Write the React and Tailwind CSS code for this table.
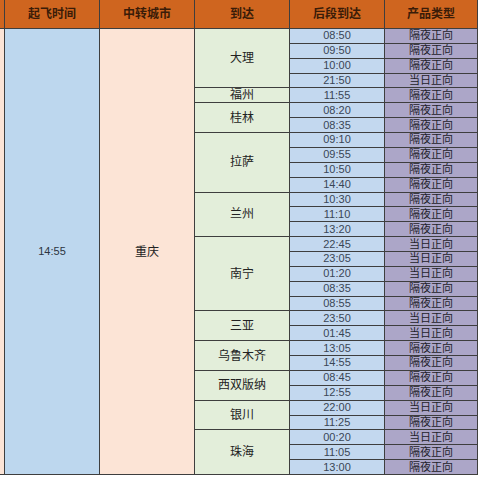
const GROUPS = [
  { city: "大理", rows: [["08:50", "隔夜正向"], ["09:50", "隔夜正向"], ["10:00", "隔夜正向"], ["21:50", "当日正向"]] },
  { city: "福州", rows: [["11:55", "隔夜正向"]] },
  { city: "桂林", rows: [["08:20", "隔夜正向"], ["08:35", "隔夜正向"]] },
  { city: "拉萨", rows: [["09:10", "隔夜正向"], ["09:55", "隔夜正向"], ["10:50", "隔夜正向"], ["14:40", "隔夜正向"]] },
  { city: "兰州", rows: [["10:30", "隔夜正向"], ["11:10", "隔夜正向"], ["13:20", "隔夜正向"]] },
  { city: "南宁", rows: [["22:45", "当日正向"], ["23:05", "当日正向"], ["01:20", "当日正向"], ["08:35", "隔夜正向"], ["08:55", "隔夜正向"]] },
  { city: "三亚", rows: [["23:50", "当日正向"], ["01:45", "当日正向"]] },
  { city: "乌鲁木齐", rows: [["13:05", "隔夜正向"], ["14:55", "隔夜正向"]] },
  { city: "西双版纳", rows: [["08:45", "隔夜正向"], ["12:55", "隔夜正向"]] },
  { city: "银川", rows: [["22:00", "当日正向"], ["11:25", "隔夜正向"]] },
  { city: "珠海", rows: [["00:20", "当日正向"], ["11:05", "隔夜正向"], ["13:00", "隔夜正向"]] },
];

const SPAN = {
  1: "row-span-1",
  2: "row-span-2",
  3: "row-span-3",
  4: "row-span-4",
  5: "row-span-5",
};

const HEADERS = [
  ["起飞时间", "w-[94px]"],
  ["中转城市", "w-[94px]"],
  ["到达", "w-[94px]"],
  ["后段到达", "w-[94px]"],
  ["产品类型", "w-[92px]"],
];

export default function App() {
  return (
    <div
      className="w-[480px] h-[480px] bg-white overflow-hidden"
      style={{ fontFamily: '"Liberation Sans", "Noto Sans CJK SC", sans-serif' }}
    >
      <div className="w-[478px] flex flex-col gap-px bg-[#3e3e3e] pr-px pb-px">
        {/* header */}
        <div className="h-[28px] flex gap-px">
          <div className="w-[4px] bg-[#cf651f]" />
          {HEADERS.map(([label, w]) => (
            <div
              key={label}
              className={`${w} bg-[#cf651f] flex items-center justify-center text-[12px] font-bold text-[#3a1c08]`}
            >
              {label}
            </div>
          ))}
        </div>

        {/* body */}
        <div className="h-[445px] flex gap-px">
          <div className="w-[4px] bg-[#fce4d6]" />
          <div className="w-[94px] bg-[#bdd7ee] flex items-center justify-center text-[11px] text-[#2c3440]">
            14:55
          </div>
          <div className="w-[94px] bg-[#fce4d6] flex items-center justify-center text-[12px] text-[#222]">
            重庆
          </div>
          <div className="flex-1 grid grid-cols-[94px_94px_92px] grid-rows-[repeat(30,minmax(0,1fr))] gap-px">
            {GROUPS.map((g) => [
              <div
                key={g.city}
                className={`${SPAN[g.rows.length]} bg-[#e3eeda] flex items-center justify-center text-[12px] text-[#222]`}
              >
                {g.city}
              </div>,
              ...g.rows.flatMap(([t, p], i) => [
                <div
                  key={`${g.city}-t${i}`}
                  className="bg-[#c3d8ef] flex items-center justify-center text-[11px] leading-none text-[#3a4656]"
                >
                  {t}
                </div>,
                <div
                  key={`${g.city}-p${i}`}
                  className="bg-[#aca6c8] flex items-center justify-center text-[11px] leading-none text-[#1e1e2a]"
                >
                  {p}
                </div>,
              ]),
            ])}
          </div>
        </div>
      </div>
    </div>
  );
}
